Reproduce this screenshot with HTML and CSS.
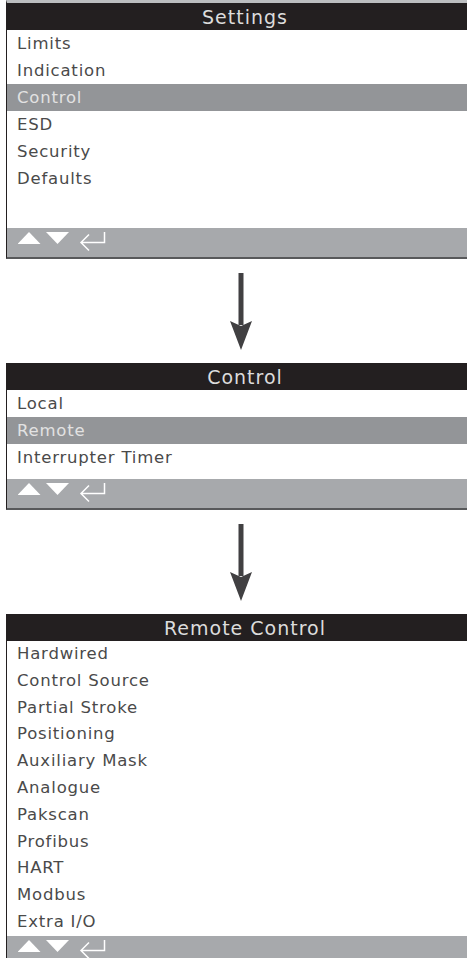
FILE: index.html
```html
<!DOCTYPE html>
<html>
<head>
<meta charset="utf-8">
<link rel="stylesheet" href="styles.css">
</head>
<body>
<section class="panel panel-first">
  <div class="title">Settings</div>
  <ul class="menu">
    <li>Limits</li>
    <li>Indication</li>
    <li class="sel">Control</li>
    <li>ESD</li>
    <li>Security</li>
    <li>Defaults</li>
  </ul>
  <div class="spacer s1"></div>
  <div class="foot">
    <svg class="keys" width="100" height="29" viewBox="0 0 100 29">
      <polygon points="11,4 22.5,16 -0.5,16" fill="#fff"/>
      <polygon points="28,4 51,4 39.5,16" fill="#fff"/>
      <path d="M86.5 4 V14.5 H63 M71 6.5 L63 14.5 L71 22.5" fill="none" stroke="#fff" stroke-width="1.5"/>
    </svg>
  </div>
</section>

<div class="arrow">
  <svg width="24" height="104" viewBox="0 0 24 104">
    <rect x="9.5" y="14" width="5" height="52" fill="#414042"/>
    <polygon points="1,62 12,67 23,62 12,91" fill="#414042"/>
  </svg>
</div>

<section class="panel">
  <div class="title">Control</div>
  <ul class="menu">
    <li>Local</li>
    <li class="sel">Remote</li>
    <li>Interrupter Timer</li>
  </ul>
  <div class="spacer s2"></div>
  <div class="foot">
    <svg class="keys" width="100" height="29" viewBox="0 0 100 29">
      <polygon points="11,4 22.5,16 -0.5,16" fill="#fff"/>
      <polygon points="28,4 51,4 39.5,16" fill="#fff"/>
      <path d="M86.5 4 V14.5 H63 M71 6.5 L63 14.5 L71 22.5" fill="none" stroke="#fff" stroke-width="1.5"/>
    </svg>
  </div>
</section>

<div class="arrow">
  <svg width="24" height="104" viewBox="0 0 24 104">
    <rect x="9.5" y="14" width="5" height="52" fill="#414042"/>
    <polygon points="1,62 12,67 23,62 12,91" fill="#414042"/>
  </svg>
</div>

<section class="panel">
  <div class="title">Remote Control</div>
  <ul class="menu tight">
    <li>Hardwired</li>
    <li>Control Source</li>
    <li>Partial Stroke</li>
    <li>Positioning</li>
    <li>Auxiliary Mask</li>
    <li>Analogue</li>
    <li>Pakscan</li>
    <li>Profibus</li>
    <li>HART</li>
    <li>Modbus</li>
    <li>Extra I/O</li>
  </ul>
  <div class="foot">
    <svg class="keys" width="100" height="29" viewBox="0 0 100 29">
      <polygon points="11,4 22.5,16 -0.5,16" fill="#fff"/>
      <polygon points="28,4 51,4 39.5,16" fill="#fff"/>
      <path d="M86.5 4 V14.5 H63 M71 6.5 L63 14.5 L71 22.5" fill="none" stroke="#fff" stroke-width="1.5"/>
    </svg>
  </div>
</section>
</body>
</html>
```

FILE: styles.css
```css
html, body {
  margin: 0;
  padding: 0;
  background: #fff;
  overflow: hidden;
}
body {
  width: 467px;
  height: 958px;
  font-family: "DejaVu Sans", "Liberation Sans", sans-serif;
}
.panel {
  margin-left: 6px;
  width: 478px;
  border-left: 1px solid #231f20;
  border-bottom: 2px solid #58595b;
  box-sizing: border-box;
}
.panel-first {
  border-top: 3px solid #bcbec0;
}
.title {
  height: 27px;
  background: #231f20;
  color: #dcdcdc;
  font-size: 19px;
  line-height: 28px;
  letter-spacing: 1px;
  text-align: center;
  margin-left: -1px;
}
.menu {
  list-style: none;
  margin: 0;
  padding: 0;
}
.menu li {
  height: 27px;
  line-height: 27px;
  padding-left: 10px;
  font-size: 16.5px;
  letter-spacing: 0.8px;
  color: #4a4a4a;
}
.menu.tight li {
  height: 26.8px;
  line-height: 26.8px;
}
.menu li.sel {
  background: #939598;
  color: #e2e2e2;
}
.spacer.s1 { height: 36px; }
.spacer.s2 { height: 8px; }
.foot {
  height: 29px;
  background: #a7a9ac;
  padding-left: 11px;
}
.keys {
  display: block;
}
.arrow {
  height: 104px;
  padding-left: 229px;
}
.arrow svg {
  display: block;
}
```
